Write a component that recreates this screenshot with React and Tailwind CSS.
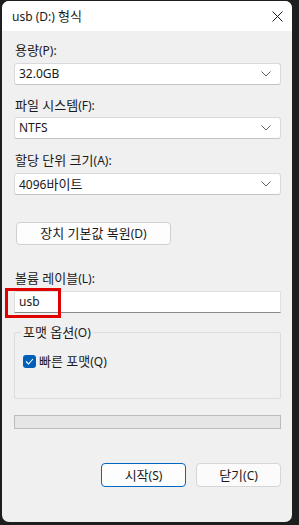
import React from "react";

const font = { fontFamily: '"Noto Sans", "Noto Sans CJK KR", sans-serif' };

function T({ children }) {
  const parts = String(children).split(/([\uAC00-\uD7A3]+(?: [\uAC00-\uD7A3]+)*)/);
  return (
    <>
      {parts.map((p, i) =>
        /[\uAC00-\uD7A3]/.test(p) ? (
          <span key={i} className="text-[13px]">{p}</span>
        ) : (
          <span key={i}>{p}</span>
        )
      )}
    </>
  );
}

function Chevron() {
  return (
    <svg width="10" height="6" viewBox="0 0 10 6" className="text-[#5f5f5f]">
      <path d="M0.5 0.5 L5 5 L9.5 0.5" fill="none" stroke="currentColor" strokeWidth="1" />
    </svg>
  );
}

function Select({ value }) {
  return (
    <div className="h-[22px] bg-white border border-[#d9d9d9] border-b-[#c4c4c4] rounded-[3px] flex items-center justify-between pl-[4px] pr-[9px] text-[12px] text-[#1a1a1a]">
      <span className="leading-4"><T>{value}</T></span>
      <Chevron />
    </div>
  );
}

function Label({ children, className = "" }) {
  return (
    <div className={"h-4 leading-4 text-[12px] text-[#1a1a1a] pl-[1px] whitespace-nowrap " + className}>
      <T>{children}</T>
    </div>
  );
}

export default function App() {
  return (
    <div className="w-[299px] h-[525px] bg-[#1e1e1e] pt-[1px] pl-[2px]" style={font}>
      <div className="relative w-[290px] h-[521px] rounded-[7px] overflow-hidden bg-[#f0f0f0] flex flex-col">
        <div className="h-[30px] bg-white flex items-center justify-between pl-[10px] pr-[9px]">
          <span className="text-[12px] leading-4 text-[#1a1a1a]"><T>usb (D:) 형식</T></span>
          <svg width="11" height="11" viewBox="0 0 11 11">
            <path d="M0.5 0.5 L10.5 10.5 M10.5 0.5 L0.5 10.5" stroke="#1a1a1a" strokeWidth="1" />
          </svg>
        </div>
        <div className="flex flex-col pl-[12px] pr-[11px]">
          <Label className="mt-[11px]">용량(P):</Label>
          <div className="mt-[5px]"><Select value="32.0GB" /></div>
          <Label className="mt-[12px]">파일 시스템(F):</Label>
          <div className="mt-[4px]"><Select value="NTFS" /></div>
          <Label className="mt-[13px]">할당 단위 크기(A):</Label>
          <div className="mt-[5px]"><Select value="4096바이트" /></div>
          <div className="mt-[27px] ml-[2px] w-[155px] h-[23px] bg-[#fdfdfd] border border-[#d0d0d0] rounded-[4px] flex items-center justify-center text-[12px] leading-4 text-[#1a1a1a]">
            <span><T>장치 기본값 복원(D)</T></span>
          </div>
          <Label className="mt-[25px]">볼륨 레이블(L):</Label>
          <div className="mt-[5px] h-[22px] bg-white border border-[#e0e0e0] border-b-[#8a8a8a] flex items-center pl-[4px] text-[12px] text-[#1a1a1a]">
            usb
          </div>
          <div className="relative mt-[19px] h-[67px] border border-[#dcdcdc] rounded-[2px]">
            <div className="absolute -top-[9px] left-[6px] bg-[#f0f0f0] px-[2px] text-[12px] leading-4 text-[#1a1a1a] whitespace-nowrap">
              <T>포맷 옵션(O)</T>
            </div>
            <div className="mt-[20px] ml-[8px] flex items-center gap-[3px]">
              <div className="w-[13px] h-[13px] rounded-[3px] bg-[#005fb8] flex items-center justify-center">
                <svg width="9" height="7" viewBox="0 0 9 7">
                  <path d="M1 3.5 L3.5 6 L8 1" fill="none" stroke="white" strokeWidth="1.1" />
                </svg>
              </div>
              <span className="text-[12px] leading-4 text-[#1a1a1a] whitespace-nowrap"><T>빠른 포맷(Q)</T></span>
            </div>
          </div>
          <div className="mt-[16px] h-[14px] bg-[#e6e6e6] border border-[#bcbcbc]"></div>
          <div className="mt-[34px] flex justify-end gap-[10px]">
            <div className="w-[85px] h-[24px] bg-[#fdfdfd] border border-[#0067c0] rounded-[4px] flex items-center justify-center text-[12px] leading-4 text-[#1a1a1a]">
              <span><T>시작(S)</T></span>
            </div>
            <div className="w-[85px] h-[24px] bg-[#fbfbfb] border border-[#d6d6d6] rounded-[4px] flex items-center justify-center text-[12px] leading-4 text-[#1a1a1a]">
              <span><T>닫기(C)</T></span>
            </div>
          </div>
        </div>
      </div>
      <div className="absolute left-[5px] top-[288px] w-[56px] h-[30px] border-[3px] border-[#e00000]"></div>
    </div>
  );
}
